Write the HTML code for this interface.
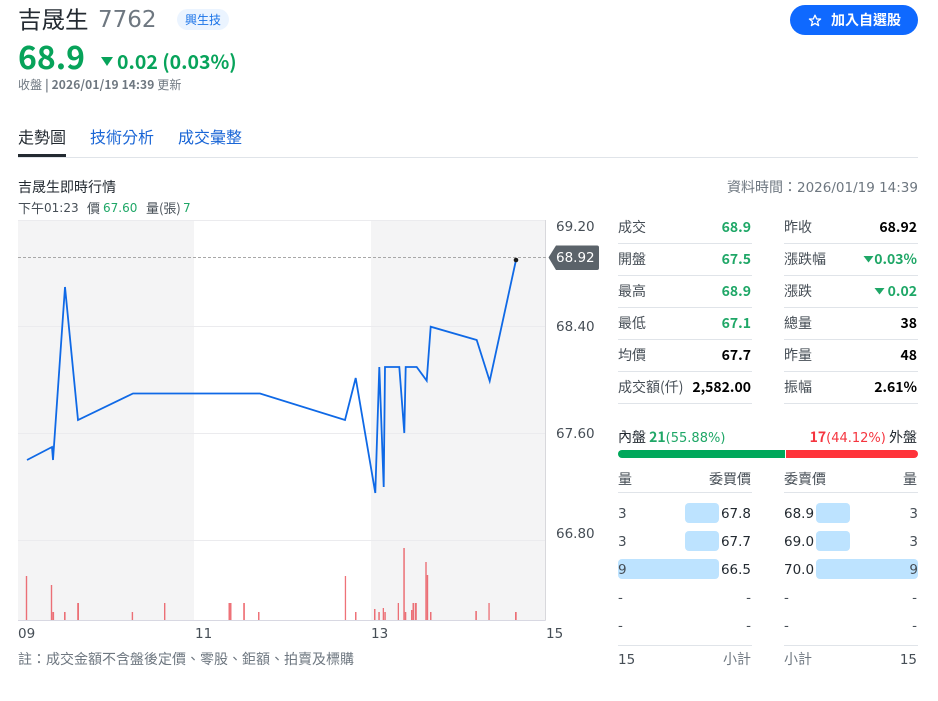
<!DOCTYPE html>
<html><head><meta charset="utf-8">
<style>
html,body{margin:0;padding:0;background:#fff;width:938px;height:701px;overflow:hidden}
body{font-family:"Noto Sans CJK TC",sans-serif;position:relative;color:#232a31}
.t{position:absolute;white-space:nowrap;line-height:20px;height:20px}
.r{text-align:right}
.ln{position:absolute;height:1px;background:#e0e4e9}
.g{color:#1fa767}.k{color:#000;font-weight:700}
.lab{font-size:14px;color:#464e56}
.v{font-size:14px;font-weight:700}
.d{font-family:"DejaVu Sans",sans-serif;font-size:13.500px;font-weight:400}
.n{color:#232a31}
.a{color:#464e56}
.bx{position:absolute;background:#bde3ff;border-radius:4px;height:20px}
</style></head><body>
<div class="t" style="left:18px;top:6px;font-size:23.500px;line-height:24px;height:24px;color:#232a31">吉晟生</div>
<div class="t d" style="left:98px;top:8px;font-size:23px;line-height:24px;height:24px;color:#6e7780">7762</div>
<div style="position:absolute;left:177px;top:9px;width:52px;height:21px;border-radius:11px;background:#ebf4ff;color:#1a73e8;font-size:12px;line-height:21px;text-align:center">興生技</div>
<div class="t" style="left:18px;top:38px;font-size:32px;font-weight:700;line-height:36px;height:36px;color:#07a35a">68.9</div>
<svg style="position:absolute;left:100px;top:56px" width="14" height="11"><path d="M1 1H13L7 10Z" fill="#07a35a"/></svg>
<div class="t" style="left:117px;top:50px;font-size:19.500px;font-weight:700;color:#07a35a;line-height:22px;height:22px">0.02 (0.03%)</div>
<div class="t" style="left:18px;top:75px;font-size:12px;letter-spacing:.12px;color:#6e7780;font-weight:700"><span style="font-weight:400">收盤</span> | 2026/01/19 14:39 <span style="font-weight:400">更新</span></div>

<div style="position:absolute;left:790px;top:5px;width:128px;height:30px;border-radius:15px;background:#0f69ff"></div>
<svg style="position:absolute;left:808px;top:14px" width="14" height="13" viewBox="0 0 14 13"><path d="M7 1.200L8.700 5H12.600L9.500 7.600L10.600 11.600L7 9.400L3.400 11.600L4.500 7.600L1.400 5H5.300Z" fill="none" stroke="#fff" stroke-width="1.300" stroke-linejoin="round"/></svg>
<div class="t" style="left:831px;top:10px;font-size:14px;color:#fff;font-weight:700">加入自選股</div>

<div class="t" style="left:18px;top:126px;font-size:16px;color:#232a31">走勢圖</div>
<div class="t" style="left:90px;top:126px;font-size:16px;color:#1a66d6">技術分析</div>
<div class="t" style="left:178px;top:126px;font-size:16px;color:#1a66d6">成交彙整</div>
<div class="ln" style="left:18px;top:157px;width:900px"></div>
<div style="position:absolute;left:18px;top:154px;width:48px;height:3px;background:#232a31"></div>

<div class="t" style="left:18px;top:177px;font-size:14px;color:#232a31">吉晟生即時行情</div>
<div class="t r" style="right:20px;top:177px;font-size:14px;color:#6e7780">資料時間：<span class="d">2026/01/19 14:39</span></div>
<div class="t" style="left:18px;top:198px;font-size:13px;color:#464e56">下午</div>
<div class="t d" style="left:44px;top:198px;font-size:12px;color:#464e56">01:23</div>
<div class="t" style="left:87px;top:198px;font-size:13px;color:#464e56">價</div>
<div class="t d g" style="left:103px;top:198px;font-size:12px">67.60</div>
<div class="t" style="left:146px;top:198px;font-size:13px;color:#464e56">量(張)</div>
<div class="t d g" style="left:183px;top:198px;font-size:12px">7</div>

<svg style="position:absolute;left:0;top:215px" width="600" height="410" viewBox="0 215 600 410">
<rect x="18" y="220" width="176" height="400.500" fill="#f4f4f5"/>
<rect x="371" y="220" width="174.500" height="400.500" fill="#f4f4f5"/>
<g stroke="#ebebee" stroke-width="1"><path d="M18 220.500H545M18 326.500H545M18 433.500H545M18 540.500H545"/></g>
<path d="M545.500 220V620.500" stroke="#d8d8dc" stroke-width="1"/>
<path d="M18 620.500H545.500" stroke="#d8d8e2" stroke-width="1"/>
<path d="M18 257.500H548" stroke="#a8a8a8" stroke-width="1" stroke-dasharray="3 2"/>
<g fill="#e8434b" fill-opacity=".75">
<rect x="25.800" y="576" width="1.400" height="44"/><rect x="50.800" y="585" width="1.400" height="35"/><rect x="52.300" y="612" width="1.800" height="8"/><rect x="64" y="612" width="1.600" height="8"/><rect x="77.200" y="603" width="1.800" height="17"/><rect x="131.700" y="612" width="1.400" height="8"/><rect x="164" y="603" width="1.400" height="17"/><rect x="228.500" y="603" width="1.500" height="17"/><rect x="230" y="603" width="1.500" height="17"/><rect x="243.200" y="603" width="1.700" height="17"/><rect x="258" y="612" width="1.500" height="8"/><rect x="344.800" y="576" width="1.300" height="44"/><rect x="355" y="612" width="1.500" height="8"/><rect x="374" y="609" width="1.500" height="11"/><rect x="378.300" y="612" width="1.500" height="8"/><rect x="382.700" y="608" width="1.300" height="12"/><rect x="384.300" y="612" width="1.500" height="8"/><rect x="397.700" y="603" width="1.300" height="17"/><rect x="403.300" y="548" width="1.500" height="72"/><rect x="404.800" y="612" width="1.500" height="8"/><rect x="411" y="610" width="1.400" height="10"/><rect x="412.500" y="603" width="1.800" height="17"/><rect x="415" y="603" width="1.800" height="17"/><rect x="425.300" y="562" width="1.400" height="58"/><rect x="426.700" y="575" width="1.500" height="45"/><rect x="430" y="612" width="1.500" height="8"/><rect x="475.300" y="611" width="1.600" height="9"/><rect x="488.400" y="603" width="1.300" height="17"/><rect x="515" y="612" width="1.700" height="8"/>
</g>
<polyline fill="none" stroke="#0f69e6" stroke-width="1.800" stroke-linejoin="miter" points="27,460 52,447 53,460 65,287 78,420 133,393.500 260,393.500 345,420 355.700,378 375.300,493 379.300,367 383.700,487 385,367 399.300,367 404.300,433 405.700,367 416.700,367 426.700,380.700 430.700,326.700 476.700,340 489.700,381 516,260"/>
<circle cx="516" cy="260" r="2.300" fill="#1a1a1a"/>
<path d="M556 245.500H597a2 2 0 0 1 2 2V268a2 2 0 0 1-2 2H556L548.500 257.500Z" fill="#5b636a"/>
</svg>
<div class="t d" style="left:556px;top:248px;color:#fff">68.92</div>
<div class="t d a" style="left:556px;top:217px">69.20</div>
<div class="t d a" style="left:556px;top:317px">68.40</div>
<div class="t d a" style="left:556px;top:424px">67.60</div>
<div class="t d a" style="left:556px;top:524px">66.80</div>
<div class="t d a" style="left:18px;top:624px">09</div>
<div class="t d a" style="left:195px;top:624px">11</div>
<div class="t d a" style="left:371px;top:624px">13</div>
<div class="t d a" style="left:546px;top:624px">15</div>
<div class="t" style="left:18px;top:649px;font-size:14px;color:#6e7780">註：成交金額不含盤後定價、零股、鉅額、拍賣及標購</div>

<!-- stats left -->
<div class="t lab" style="left:618px;top:217px">成交</div><div class="t v r g" style="right:187px;top:217px">68.9</div>
<div class="t lab" style="left:618px;top:249px">開盤</div><div class="t v r g" style="right:187px;top:249px">67.5</div>
<div class="t lab" style="left:618px;top:281px">最高</div><div class="t v r g" style="right:187px;top:281px">68.9</div>
<div class="t lab" style="left:618px;top:313px">最低</div><div class="t v r g" style="right:187px;top:313px">67.1</div>
<div class="t lab" style="left:618px;top:345px">均價</div><div class="t v r k" style="right:187px;top:345px">67.7</div>
<div class="t lab" style="left:618px;top:377px">成交額(仟)</div><div class="t v r k" style="right:187px;top:377px">2,582.00</div>
<!-- stats right -->
<div class="t lab" style="left:784px;top:217px">昨收</div><div class="t v r k" style="right:21px;top:217px">68.92</div>
<div class="t lab" style="left:784px;top:249px">漲跌幅</div><div class="t v r g" style="right:21px;top:249px">0.03%</div>
<svg style="position:absolute;left:863px;top:255px" width="11" height="8"><path d="M0.500 1H10.500L5.500 7.500Z" fill="#1fa767"/></svg>
<div class="t lab" style="left:784px;top:281px">漲跌</div><div class="t v r g" style="right:21px;top:281px">0.02</div>
<svg style="position:absolute;left:874px;top:287px" width="11" height="8"><path d="M0.500 1H10.500L5.500 7.500Z" fill="#1fa767"/></svg>
<div class="t lab" style="left:784px;top:313px">總量</div><div class="t v r k" style="right:21px;top:313px">38</div>
<div class="t lab" style="left:784px;top:345px">昨量</div><div class="t v r k" style="right:21px;top:345px">48</div>
<div class="t lab" style="left:784px;top:377px">振幅</div><div class="t v r k" style="right:21px;top:377px">2.61%</div>
<div class="ln" style="left:618px;top:243px;width:134px"></div><div class="ln" style="left:784px;top:243px;width:134px"></div>
<div class="ln" style="left:618px;top:275px;width:134px"></div><div class="ln" style="left:784px;top:275px;width:134px"></div>
<div class="ln" style="left:618px;top:307px;width:134px"></div><div class="ln" style="left:784px;top:307px;width:134px"></div>
<div class="ln" style="left:618px;top:339px;width:134px"></div><div class="ln" style="left:784px;top:339px;width:134px"></div>
<div class="ln" style="left:618px;top:371px;width:134px"></div><div class="ln" style="left:784px;top:371px;width:134px"></div>
<div class="ln" style="left:618px;top:403px;width:134px"></div><div class="ln" style="left:784px;top:403px;width:134px"></div>

<div class="t" style="left:618px;top:427px;font-size:14px;color:#232a31">內盤 <b style="color:#1fa767">21</b><span class="d g" style="font-size:13px">(55.88%)</span></div>
<div class="t r" style="right:21px;top:427px;font-size:14px;color:#232a31"><b style="color:#f5353f">17</b><span class="d" style="font-size:13px;color:#f5353f">(44.12%)</span> 外盤</div>
<div style="position:absolute;left:618px;top:450px;width:166.500px;height:8px;background:#00a85b;border-radius:4px 0 0 4px"></div>
<div style="position:absolute;left:786px;top:450px;width:132px;height:8px;background:#ff333a;border-radius:0 4px 4px 0"></div>

<div class="t lab" style="left:618px;top:469px">量</div><div class="t lab r" style="right:187px;top:469px">委買價</div>
<div class="t lab" style="left:784px;top:469px">委賣價</div><div class="t lab r" style="right:21px;top:469px">量</div>
<div class="ln" style="left:618px;top:492px;width:134px"></div><div class="ln" style="left:784px;top:492px;width:134px"></div>

<div class="bx" style="left:685px;top:503px;width:34px"></div><div class="bx" style="left:816px;top:503px;width:34px"></div>
<div class="bx" style="left:685px;top:531px;width:34px"></div><div class="bx" style="left:816px;top:531px;width:34px"></div>
<div class="bx" style="left:618px;top:559px;width:101px"></div><div class="bx" style="left:816px;top:559px;width:102px"></div>

<div class="t d a" style="left:618px;top:504px">3</div><div class="t d r n" style="right:187px;top:504px">67.8</div><div class="t d n" style="left:784px;top:504px">68.9</div><div class="t d a r" style="right:20px;top:504px">3</div>
<div class="t d a" style="left:618px;top:532px">3</div><div class="t d r n" style="right:187px;top:532px">67.7</div><div class="t d n" style="left:784px;top:532px">69.0</div><div class="t d a r" style="right:20px;top:532px">3</div>
<div class="t d a" style="left:618px;top:560px">9</div><div class="t d r n" style="right:187px;top:560px">66.5</div><div class="t d n" style="left:784px;top:560px">70.0</div><div class="t d a r" style="right:20px;top:560px">9</div>
<div class="t d a" style="left:618px;top:588px">-</div><div class="t d a r" style="right:187px;top:588px">-</div><div class="t d a" style="left:784px;top:588px">-</div><div class="t d a r" style="right:21px;top:588px">-</div>
<div class="t d a" style="left:618px;top:616px">-</div><div class="t d a r" style="right:187px;top:616px">-</div><div class="t d a" style="left:784px;top:616px">-</div><div class="t d a r" style="right:21px;top:616px">-</div>
<div class="ln" style="left:618px;top:645px;width:134px"></div><div class="ln" style="left:784px;top:645px;width:134px"></div>
<div class="t d a" style="left:618px;top:650px">15</div><div class="t r" style="right:187px;top:649px;font-size:14px;color:#6e7780">小計</div>
<div class="t" style="left:784px;top:649px;font-size:14px;color:#6e7780">小計</div><div class="t d a r" style="right:21px;top:650px">15</div>
</body></html>
